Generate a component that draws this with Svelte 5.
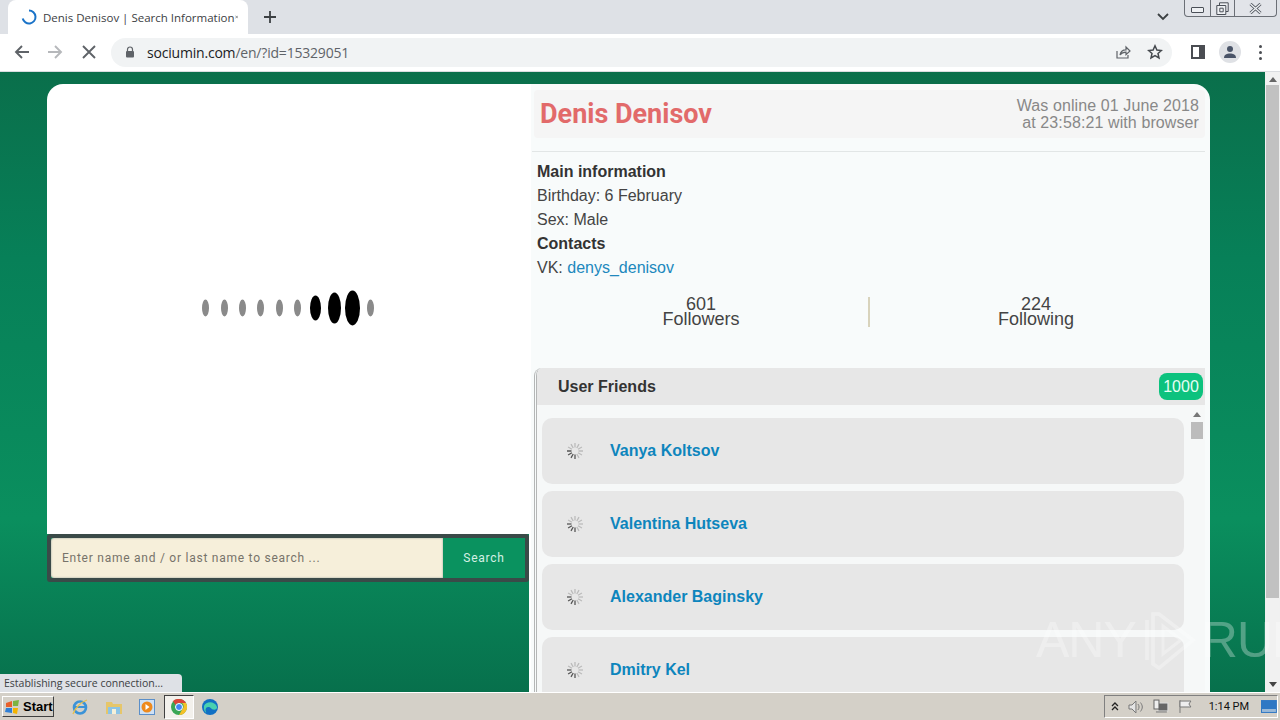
<script>
	const friends = ['Vanya Koltsov', 'Valentina Hutseva', 'Alexander Baginsky', 'Dmitry Kel'];
	const ovals = [
		[205, 7, 17, '#8a8a8a'], [224, 7, 17, '#8a8a8a'], [242, 7, 17, '#8a8a8a'], [260, 7, 17, '#8a8a8a'],
		[279, 7, 17, '#8a8a8a'], [297, 7, 17, '#8a8a8a'], [315, 11, 25, '#000'], [334, 13, 31, '#000'],
		[352, 15, 35, '#000'], [370, 7, 17, '#8a8a8a']
	];
	const spokes = Array.from({ length: 12 }, (_, i) => i * 30);
</script>

<div class="screen">
	<header class="tabstrip">
		<div class="tab">
			<svg class="tab-spinner" viewBox="0 0 16 16" width="16" height="16"><path d="M8 1.5A6.5 6.5 0 1 1 1.7 9.6" fill="none" stroke="#1a73c8" stroke-width="2"/></svg>
			<span class="tab-title">Denis Denisov | Search Information</span>
			<svg class="tab-close" viewBox="0 0 10 10" width="10" height="10"><path d="M1 1l8 8M9 1l-8 8" stroke="#3c4043" stroke-width="1.6"/></svg>
		</div>
		<svg class="newtab" viewBox="0 0 12 12" width="12" height="12"><path d="M6 0v12M0 6h12" stroke="#3c4043" stroke-width="1.8"/></svg>
		<svg class="tab-menu" viewBox="0 0 12 8" width="12" height="8"><path d="M1 1l5 5 5-5" fill="none" stroke="#3c4043" stroke-width="1.8"/></svg>
		<div class="winbtns">
			<span class="winbtn min"><i></i></span>
			<span class="winbtn max">
				<svg viewBox="0 0 13 13" width="13" height="13"><path d="M3.5 3V.8h8.7v8.7H10M.8 3.5h9v9h-9z" fill="#eef0f3" stroke="#4a4f57"/><path d="M3.8 6.2h3.4v3.6H3.8z" fill="none" stroke="#4a4f57"/></svg>
			</span>
			<span class="winbtn cls">
				<svg viewBox="0 0 13 11" width="13" height="11"><path d="M1.5 1l10 9M11.5 1l-10 9" stroke="#4a4f57" stroke-width="3"/><path d="M1.5 1l10 9M11.5 1l-10 9" stroke="#eef0f3" stroke-width="1.4"/></svg>
			</span>
		</div>
	</header>

	<nav class="toolbar">
		<svg class="nav-icon" viewBox="0 0 16 16" width="16" height="16"><path d="M15 8H2M8 2L2 8l6 6" fill="none" stroke="#5f6368" stroke-width="1.9"/></svg>
		<svg class="nav-icon" viewBox="0 0 16 16" width="16" height="16"><path d="M1 8h13M8 2l6 6-6 6" fill="none" stroke="#b6b8bb" stroke-width="1.9"/></svg>
		<svg class="nav-icon" viewBox="0 0 14 14" width="14" height="14"><path d="M1 1l12 12M13 1L1 13" stroke="#5f6368" stroke-width="1.9"/></svg>
		<div class="omnibox">
			<svg class="lock" viewBox="0 0 10 12" width="10" height="12"><path d="M2.5 5V3.5a2.5 2.5 0 0 1 5 0V5" fill="none" stroke="#5f6368" stroke-width="1.2"/><rect x="1" y="5" width="8" height="6.5" rx="1" fill="#5f6368"/></svg>
			<span class="url"><b>sociumin.com</b>/en/?id=15329051</span>
			<svg class="omni-share" viewBox="0 0 16 16" width="16" height="16"><path d="M2 7v7h11v-3" fill="none" stroke="#5f6368" stroke-width="1.2"/><path d="M5 11c.5-3.5 3-5.2 6-5.2V3l4 4-4 3.6V8.2C8.500 8.200 6.500 9 5 11z" fill="none" stroke="#5f6368" stroke-width="1.2"/></svg>
			<svg class="omni-star" viewBox="0 0 16 16" width="16" height="16"><path d="M8 1.800l1.900 4.200 4.500.5-3.400 3 1 4.500L8 11.700 4 14l1-4.500-3.400-3 4.500-.5z" fill="none" stroke="#45494e" stroke-width="1.500"/></svg>
		</div>
		<svg class="side-icon" viewBox="0 0 14 14" width="14" height="14"><path d="M0 0h14v14H0z" fill="#4a4d52"/><path d="M2 2h6v10H2z" fill="#fff"/></svg>
		<span class="avatar">
			<svg viewBox="0 0 14 14" width="14" height="14"><circle cx="7" cy="4" r="3" fill="#4a5468"/><path d="M1 13c0-3.500 3-4.500 6-4.500s6 1 6 4.500z" fill="#4a5468"/></svg>
		</span>
		<span class="kebab"><i></i><i></i><i></i></span>
	</nav>

	<div class="viewport">
		<main class="page">
			<section class="left">
				<div class="preview">
					<div class="loader">
						{#each ovals as [x, w, h, c]}
							<span class="oval" style="left:{x - 47 - w / 2}px;width:{w}px;height:{h}px;background:{c}"></span>
						{/each}
					</div>
				</div>
				<form class="search">
					<span class="search-input">Enter name and / or last name to search ...</span>
					<span class="search-btn">Search</span>
				</form>
			</section>

			<section class="right">
				<div class="title-row">
					<h1>Denis Denisov</h1>
					<p class="last-seen">Was online 01 June 2018<br />at 23:58:21 with browser</p>
				</div>
				<hr />
				<div class="info">
					<h2>Main information</h2>
					<p>Birthday: 6 February</p>
					<p>Sex: Male</p>
					<h2>Contacts</h2>
					<p>VK: <a href="#vk">denys_denisov</a></p>
				</div>
				<div class="stats">
					<div class="stat">601<br />Followers</div>
					<div class="stat">224<br />Following</div>
				</div>
				<div class="friends">
					<div class="friends-head">
						<span>User Friends</span>
						<span class="badge">1000</span>
					</div>
					<div class="friends-body">
						<ul>
							{#each friends as name}
								<li>
									<svg class="spinner" viewBox="-9 -9 18 18" width="18" height="18">
										{#each spokes as a, i}
											<line x1="0" y1="-3.500" x2="0" y2="-8" transform="rotate({a})" stroke={i > 5 && i < 10 ? '#555' : '#bbb'} stroke-width="1.300"/>
										{/each}
									</svg>
									<a href="#friend">{name}</a>
								</li>
							{/each}
						</ul>
						<div class="inner-scroll">
							<svg viewBox="0 0 8 5" width="8" height="5"><path d="M4 0l4 5H0z" fill="#777"/></svg>
							<span class="inner-thumb"></span>
						</div>
					</div>
				</div>
			</section>
		</main>

		<aside class="page-scroll">
			<svg viewBox="0 0 8 5" width="8" height="5"><path d="M4 0l4 5H0z" fill="#666"/></svg>
			<span class="page-thumb"></span>
			<svg class="down" viewBox="0 0 8 5" width="8" height="5"><path d="M0 0h8L4 5z" fill="#444"/></svg>
		</aside>

		<div class="status-bubble">Establishing secure connection...</div>

		<div class="watermark">
			<span>ANY</span>
			<svg viewBox="0 0 60 64" width="60" height="64"><path d="M8 12v40M14 6v50l6 4 34-28L20 6z" fill="none" stroke="#fff" stroke-width="3.500"/><path d="M24 18v28l18-14z" fill="none" stroke="#fff" stroke-width="3"/></svg>
			<span>RUN</span>
		</div>
	</div>

	<footer class="taskbar">
		<button class="start">
			<svg viewBox="0 0 16 14" width="16" height="14"><path d="M1 3l6-2v6H1z" fill="#e8602c"/><path d="M8 1l6-1-1 6H8z" fill="#7cb342"/><path d="M1 8h6v5l-7-1z" fill="#2f7fd6"/><path d="M8 8h5l-1 6-4-1z" fill="#f4b400"/></svg>
			Start
		</button>
		<div class="quick">
			<svg viewBox="0 0 18 18" width="18" height="18"><circle cx="9" cy="9.500" r="6" fill="none" stroke="#3b93d8" stroke-width="2.600"/><path d="M4 9h10" stroke="#3b93d8" stroke-width="2"/><path d="M2 16c2-6 8-12 14-14" fill="none" stroke="#e9c04a" stroke-width="1.300"/></svg>
			<svg viewBox="0 0 18 16" width="18" height="16"><path d="M1 3h6l1 2h9v10H1z" fill="#e6c66a"/><path d="M3 8h12v7H3z" fill="#8cc4e6"/><path d="M7 10h4v5H7z" fill="#f5f0d8"/></svg>
			<svg viewBox="0 0 16 16" width="16" height="16"><rect x=".5" y=".5" width="15" height="15" fill="#cfe1f5" stroke="#5b8fc9"/><circle cx="8" cy="8" r="5.500" fill="#ee8a1d"/><path d="M6.500 5l4 3-4 3z" fill="#fff"/></svg>
			<span class="chrome-item">
				<svg viewBox="0 0 16 16" width="16" height="16"><circle cx="8" cy="8" r="8" fill="#3aa655"/><path d="M8 0a8 8 0 0 1 7 4H8a4 4 0 0 0-3.500 2L2 2a8 8 0 0 1 6-2z" fill="#dc4437"/><path d="M15 4a8 8 0 0 1-7 12l3.500-6A4 4 0 0 0 11 4z" fill="#f5c026"/><circle cx="8" cy="8" r="3.500" fill="#4285f4" stroke="#fff"/></svg>
			</span>
			<svg viewBox="0 0 16 16" width="16" height="16"><circle cx="8" cy="8" r="8" fill="#1170c4"/><path d="M2 7c2-5 11-5 13 1 .5 2-2 3-4 2.500C9 10 9 8 6 8c-2 0-3.500 3-1.500 6C2.500 13 1.500 10 2 7z" fill="#48d1b0"/></svg>
		</div>
		<div class="tray">
			<svg viewBox="0 0 8 9" width="8" height="9"><path d="M1 4l3-3 3 3M1 8l3-3 3 3" fill="none" stroke="#222" stroke-width="1.300"/></svg>
			<svg viewBox="0 0 16 14" width="16" height="14"><path d="M1 5h3l4-4v12L4 9H1z" fill="#e4e4e4" stroke="#777"/><path d="M10 4c1.500 2 1.500 4 0 6M12.500 2.500c2.500 3 2.500 6 0 9" fill="none" stroke="#777"/></svg>
			<svg viewBox="0 0 16 15" width="16" height="15"><rect x="5" y="4" width="10" height="8" fill="#666" stroke="#ddd"/><rect x="1" y="1" width="5" height="9" fill="#eee" stroke="#666"/><path d="M3 13h11" stroke="#777"/></svg>
			<svg viewBox="0 0 15 15" width="15" height="15"><path d="M2 1v13" stroke="#777"/><path d="M2 2h11l-2 3 2 3H2z" fill="#eee" stroke="#777"/></svg>
			<span class="clock">1:14 PM</span>
			<svg class="desk" viewBox="0 0 16 13" width="16" height="13"><rect width="16" height="13" fill="#2f78c4"/><path d="M1 9h14v3H1z" fill="#9ab9d8"/></svg>
		</div>
	</footer>
</div>

<style>
	:global(body) {
		margin: 0;
		overflow: hidden;
	}

	.screen {
		width: 1280px;
		height: 720px;
		display: flex;
		flex-direction: column;
		overflow: hidden;
		font-family: 'Liberation Sans', Arial, sans-serif;
		color: #333;
	}

	/* browser chrome */
	.tabstrip {
		height: 34px;
		flex: none;
		display: flex;
		align-items: flex-start;
		background: #dee1e6;
		padding-left: 8px;
		box-sizing: border-box;
	}

	.tab {
		width: 240px;
		height: 34px;
		margin-top: 0;
		box-sizing: border-box;
		padding: 0 10px 0 13px;
		display: flex;
		align-items: center;
		background: #fff;
		border-radius: 8px 8px 0 0;
	}

	.tab-spinner {
		margin-right: 6px;
		flex: none;
	}

	.tab-title {
		flex: 1;
		font: 11.500px 'Open Sans', sans-serif;
		color: #3c4043;
		white-space: nowrap;
	}

	.newtab {
		margin: 11px 0 0 16px;
	}

	.tab-menu {
		margin: 13px 0 0 auto;
	}

	.winbtns {
		display: flex;
		margin: 0 3px 0 15px;
		height: 16px;
		border: 1px solid #6b6f76;
		border-top: 0;
		border-radius: 0 0 4px 4px;
		background: #e2e4e9;
	}

	.winbtn {
		display: flex;
		align-items: center;
		justify-content: center;
		height: 16px;
		box-sizing: border-box;
	}

	.winbtn + .winbtn {
		border-left: 1px solid #6b6f76;
	}

	.min {
		width: 25px;
	}

	.min i {
		display: block;
		width: 11px;
		height: 4px;
		margin-top: 4px;
		background: #eef0f3;
		border: 1px solid #4a4f57;
		border-radius: 1px;
	}

	.max {
		width: 24px;
	}

	.cls {
		width: 42px;
	}

	.toolbar {
		height: 38px;
		flex: none;
		box-sizing: border-box;
		display: flex;
		align-items: center;
		padding: 0 0 1px 14px;
		background: #fff;
		border-bottom: 1px solid #dadce0;
	}

	.nav-icon {
		flex: none;
		margin-right: 17px;
	}

	.nav-icon:nth-child(3) {
		margin: 0 0 0 2px;
	}

	.omnibox {
		width: 1061px;
		height: 29px;
		margin-left: 15px;
		box-sizing: border-box;
		padding: 0 9px 0 14px;
		display: flex;
		align-items: center;
		background: #f1f3f4;
		border-radius: 15px;
	}

	.lock {
		flex: none;
		margin-right: 12px;
	}

	.url {
		flex: 1;
		font: 14px 'Open Sans', sans-serif;
		letter-spacing: -0.2px;
		color: #5f6368;
	}

	.url b {
		font-weight: 400;
		color: #202124;
	}

	.omni-share {
		margin-right: 16px;
	}

	.side-icon {
		margin-left: 19px;
	}

	.avatar {
		width: 22px;
		height: 22px;
		margin-left: 14px;
		border-radius: 50%;
		background: #dfe1e5;
		display: flex;
		align-items: center;
		justify-content: center;
	}

	.kebab {
		margin-left: 18px;
		display: flex;
		flex-direction: column;
		gap: 3px;
	}

	.kebab i {
		width: 3px;
		height: 3px;
		border-radius: 50%;
		background: #4a4d52;
	}

	/* page */
	.viewport {
		flex: 1;
		min-height: 0;
		display: flex;
		position: relative;
		background: linear-gradient(180deg, #0a6f4b 0%, #078058 30%, #0a8f5e 72%, #07704c 100%);
	}

	.page {
		flex: 1;
		min-width: 0;
		display: grid;
		grid-template-columns: 482px 681px;
		padding: 12px 0 0 47px;
		overflow: hidden;
	}

	.left {
		display: flex;
		flex-direction: column;
	}

	.preview {
		height: 450px;
		background: #fff;
		border-radius: 16px 0 0 0;
		position: relative;
	}

	.loader {
		position: absolute;
		left: 0;
		top: 224px;
	}

	.oval {
		position: absolute;
		top: 0;
		transform: translateY(-50%);
		border-radius: 50%;
		filter: blur(0.7px);
	}

	.search {
		height: 48px;
		box-sizing: border-box;
		border: 4px solid #3a4a48;
		border-radius: 3px;
		display: flex;
		background: #0a925f;
	}

	.search-input {
		flex: 1;
		display: flex;
		align-items: center;
		padding-left: 11px;
		background: #f6efda;
		border-radius: 3px 0 0 3px;
		box-shadow: inset 0 0 2px #8a9a95;
		font: 12px Roboto, sans-serif;
		letter-spacing: 0.75px;
		color: #77736a;
	}

	.search-btn {
		width: 82px;
		display: flex;
		align-items: center;
		justify-content: center;
		font: 12px Roboto, sans-serif;
		letter-spacing: 0.75px;
		color: #d5f0e5;
	}

	.right {
		background: #f8fbfb;
		border-radius: 0 16px 0 0;
		border-left: 2px solid #fff;
		box-sizing: border-box;
		padding: 6px 0 0 3px;
		display: flex;
		flex-direction: column;
		overflow: hidden;
	}

	.title-row {
		height: 48px;
		margin-right: 5px;
		background: #f5f5f5;
		border-radius: 4px;
		display: flex;
		justify-content: space-between;
		align-items: center;
		padding: 0 6px 0 6px;
	}

	h1 {
		margin: 0;
		font: 700 27px Roboto, sans-serif;
		color: #e26a6a;
	}

	.last-seen {
		margin: 0;
		font-size: 16px;
		line-height: 17px;
		letter-spacing: 0.1px;
		text-align: right;
		font-weight: 300;
		color: #888;
	}

	hr {
		margin: 13px 5px 0 -2px;
		border: 0;
		border-top: 1px solid #e2e6e6;
	}

	.info {
		padding: 8px 0 0 3px;
		font-size: 16px;
		line-height: 24px;
	}

	.info h2 {
		margin: 0;
		font: 700 16px/24px 'Liberation Sans', sans-serif;
		color: #333;
	}

	.info p {
		margin: 0;
		color: #444;
	}

	.info p:nth-of-type(2) {
		height: 24px;
	}

	.info a {
		color: #2088bd;
		text-decoration: none;
	}

	.stats {
		display: grid;
		grid-template-columns: 1fr 1fr;
		margin: 17px 8px 0 0;
	}

	.stat {
		height: 30px;
		text-align: center;
		font-size: 18px;
		line-height: 15px;
		font-weight: 400;
		color: #444;
	}

	.stat + .stat {
		border-left: 2px solid #d8d3bc;
	}

	.friends {
		margin: 41px 5px 0 0;
		flex: 1;
		min-height: 0;
		border-left: 3px double #b4b6b6;
		border-radius: 8px 0 0 0;
		display: flex;
		flex-direction: column;
		overflow: hidden;
	}

	.friends-head {
		height: 37px;
		flex: none;
		display: flex;
		align-items: center;
		justify-content: space-between;
		padding: 0 2px 0 21px;
		background: #e7e7e7;
		font: 700 16px 'Liberation Sans', sans-serif;
		color: #333;
		box-sizing: border-box;
	}

	.badge {
		width: 44px;
		height: 27px;
		display: flex;
		align-items: center;
		justify-content: center;
		border-radius: 8px;
		background: #0cc27e;
		color: #e6fff5;
		font: 400 16px 'Liberation Sans', sans-serif;
	}

	.friends-body {
		flex: 1;
		min-height: 0;
		display: flex;
		background: #f6f8f8;
		padding: 13px 0 0 5px;
	}

	ul {
		flex: 1;
		margin: 0;
		padding: 0;
		list-style: none;
	}

	li {
		height: 66px;
		margin-bottom: 7px;
		margin-right: 5px;
		display: flex;
		align-items: center;
		padding-left: 24px;
		background: #e7e7e7;
		border-radius: 10px;
	}

	.spinner {
		flex: none;
		margin-right: 26px;
	}

	li a {
		font: 700 16px 'Liberation Sans', sans-serif;
		color: #0d85bd;
		text-decoration: none;
	}

	.inner-scroll {
		width: 15px;
		flex: none;
		margin-right: 1px;
		display: flex;
		flex-direction: column;
		align-items: center;
		padding-top: -4px;
		gap: 5px;
		margin-top: -6px;
	}

	.inner-thumb {
		width: 12px;
		height: 17px;
		background: #bcbcbc;
	}

	.page-scroll {
		position: relative;
		width: 15px;
		flex: none;
		background: #f1f1f1;
		display: flex;
		flex-direction: column;
		align-items: center;
		padding-top: 5px;
		box-sizing: border-box;
	}

	.page-thumb {
		width: 13px;
		height: 513px;
		margin-top: 3px;
		background: #c1c1c1;
	}

	.page-scroll .down {
		margin-top: auto;
		margin-bottom: 5px;
	}

	.status-bubble {
		position: absolute;
		left: 0;
		bottom: 0;
		width: 182px;
		height: 18px;
		box-sizing: border-box;
		padding-left: 4px;
		background: #dee1e6;
		border-radius: 0 4px 0 0;
		font: 10.500px/19px 'Open Sans', sans-serif;
		color: #3c4043;
		white-space: nowrap;
	}

	.watermark {
		position: absolute;
		left: 1036px;
		top: 536px;
		display: flex;
		align-items: center;
		gap: 3px;
		font: 300 50px 'Liberation Sans', sans-serif;
		color: #fff;
		opacity: 0.3;
		transform-origin: left center;
		letter-spacing: -1px;
	}

	/* windows taskbar */
	.taskbar {
		height: 28px;
		flex: none;
		box-sizing: border-box;
		display: flex;
		align-items: center;
		background: #d4d0c8;
		border-top: 1px solid #fff;
		padding: 0 0 0 2px;
	}

	.start {
		width: 52px;
		height: 21px;
		padding: 0 0 0 2px;
		display: flex;
		align-items: center;
		gap: 2px;
		box-sizing: border-box;
		background: #d4d0c8;
		border: 1px solid;
		border-color: #fff #404040 #404040 #fff;
		font: 700 13px 'Liberation Sans', sans-serif;
		color: #000;
	}

	.quick {
		display: flex;
		align-items: center;
		gap: 16px;
		margin-left: 17px;
	}

	.chrome-item {
		width: 30px;
		height: 24px;
		margin: 0 -8px 0 -7px;
		box-sizing: border-box;
		display: flex;
		align-items: center;
		justify-content: center;
		background: #f3f1ec;
		border: 1px solid;
		border-color: #404040 #fff #fff #404040;
	}

	.tray {
		margin-left: auto;
		width: 174px;
		height: 23px;
		box-sizing: border-box;
		display: flex;
		align-items: center;
		gap: 9px;
		padding-left: 6px;
		border: 1px solid;
		border-color: #808080 #fff #fff #808080;
		margin-right: 2px;
	}

	.clock {
		margin-left: 7px;
		font: 11px Roboto, sans-serif;
		color: #111;
		white-space: nowrap;
	}

	.desk {
		margin-left: 3px;
	}
</style>
